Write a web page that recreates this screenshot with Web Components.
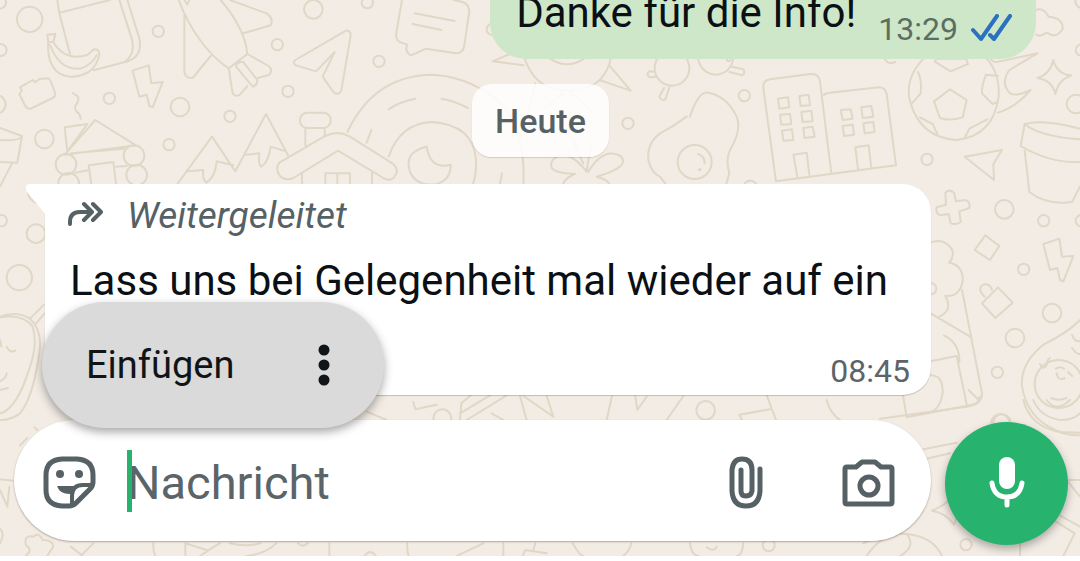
<!DOCTYPE html>
<html lang="de">
<head>
<meta charset="utf-8">
<meta name="viewport" content="width=device-width, initial-scale=1">
<title>Chat</title>
<style>
  body { margin: 0; background: #fff; font-family: Roboto, "Liberation Sans", sans-serif; }
</style>
</head>
<body>
<chat-screen>
  <chat-bubble kind="out" time="13:29">Danke für die Info!</chat-bubble>
  <date-chip>Heute</date-chip>
  <chat-bubble kind="in" time="08:45" forwarded="Weitergeleitet">Lass uns bei Gelegenheit mal wieder auf ein</chat-bubble>
  <message-composer slot="composer" placeholder="Nachricht">
    <paste-menu>Einfügen</paste-menu>
  </message-composer>
</chat-screen>

<script>
class ChatWallpaper extends HTMLElement {
  constructor() {
    super()
    this.attachShadow({ mode: 'open' })
    // doodles are drawn on a grid three times finer than the page
    this.shadowRoot.innerHTML = `
      <style>
        :host { display: block; position: absolute; inset: 0; overflow: hidden; background: #f3ece5; }
        svg { display: block; width: 100%; height: 100%; }
        g { fill: none; stroke: #e0d7c6; stroke-width: 6; stroke-linecap: round; stroke-linejoin: round; }
      </style>
      <svg viewBox="0 0 3240 1668" preserveAspectRatio="xMidYMin slice" aria-hidden="true">
        <!-- top left -->
        <g>
          <circle cx="89" cy="58" r="38"/><circle cx="2" cy="150" r="18"/><circle cx="0" cy="8" r="18"/>
          <circle cx="475" cy="94" r="17"/><circle cx="328" cy="295" r="17"/><circle cx="540" cy="321" r="28"/>
          <circle cx="690" cy="349" r="17"/><circle cx="507" cy="434" r="17"/><circle cx="133" cy="417" r="28"/>
          <circle cx="832" cy="134" r="17"/><circle cx="940" cy="28" r="28"/><circle cx="864" cy="274" r="17"/>
          <circle cx="-10" cy="313" r="27"/>
          <path d="M172 0L178 40L210 162M178 38L330 0M358 0L395 115Q408 165 372 187L280 211M382 0L418 115Q430 175 372 187"/>
          <path d="M142 104L166 102L160 126Q195 185 262 165L282 148Q298 148 298 162Q294 195 266 216Q212 244 172 216Q140 185 145 126ZM145 126L160 126M150 135Q180 215 245 205Q280 190 290 165"/>
          <path d="M60 262L98 240L106 247L118 237L146 235Q152 238 166 282Q166 290 158 294L92 326Q82 328 76 318L58 282L66 272Z"/>
          <path d="M218 279L234 290Q238 302 226 318Q222 330 238 342L242 356"/>
          <path d="M398 212L446 196L454 250L488 246L458 322L448 318L440 284L418 290Z"/>
          <path d="M536 0Q560 65 600 120Q640 175 686 205L742 162Q735 85 662 0M553 45V215Q556 236 578 234L632 168M690 0L800 40Q822 56 812 76L730 100M553 0L562 14L568 0"/>
          <path d="M686 205L698 280Q706 292 720 284L742 258M708 200Q710 184 730 186L772 240Q772 256 758 260ZM742 162L806 198Q820 210 808 224L774 234"/>
          <path d="M886 180L1038 92Q1052 90 1052 106L1024 272Q1014 288 1000 276L968 230L1004 156L948 214L888 196Q876 188 886 180Z"/>
          <path d="M0 384L66 408L52 488L0 486M66 408Q60 424 0 420M36 490L0 560"/>
          <path d="M194 382L262 372L202 454ZM194 464L286 360L408 436ZM214 460L372 446M226 518L268 510M348 500L380 498"/>
          <circle cx="198" cy="493" r="31"/><circle cx="402" cy="467" r="31"/><circle cx="206" cy="550" r="31"/><circle cx="410" cy="525" r="31"/>
          <path d="M274 552L266 496L340 486L348 552"/>
          <path d="M532 552L636 410L706 514L798 342L864 466M560 514L610 510Q606 540 620 548Q646 530 650 484L700 496M738 464L778 460Q774 494 784 500Q806 486 812 440L858 454"/>
          <rect x="900" y="338" width="92" height="46" rx="22"/>
          <path d="M916 384V436M974 384V408M838 488L972 410Q1012 388 1050 410L1180 492Q1200 512 1182 532Q1170 546 1150 534L1014 452L880 534Q856 544 840 528Q824 508 838 488ZM906 520V560M1116 520V560M976 560V520H1050V560M1012 520V560"/>
        </g>
        <!-- top middle -->
        <g transform="translate(990 0)">
          <circle cx="112" cy="8" r="17"/><circle cx="147" cy="184" r="17"/><circle cx="487" cy="88" r="17"/><circle cx="894" cy="370" r="17"/>
          <path d="M216 0L198 104Q198 122 214 128L232 134L228 146Q236 170 248 164L288 146L378 160Q396 160 402 142L418 34Q416 12 398 6L370 0M254 40L374 63M248 72L334 90"/>
          <path d="M52 396Q130 230 300 224Q400 226 490 290Q590 370 580 560M176 328Q210 304 256 296M334 296Q372 302 414 324M124 390L110 428M516 520L510 552"/>
          <path d="M176 470Q210 370 306 366Q430 374 438 480Q440 522 428 556M290 440Q220 456 240 516Q262 562 320 552Q362 540 362 494Q300 510 290 440Z"/>
          <path d="M584 176Q610 250 670 266Q760 284 810 240Q836 210 842 176M660 176Q712 210 762 176M540 162L488 184L580 196M838 196L902 272L808 240M616 250L596 330M700 278L640 330M720 274L780 330"/>
          <path d="M770 515Q712 440 668 480Q644 520 735 522Q690 540 700 570M770 515Q780 440 790 430M775 515Q820 440 872 468Q904 500 800 530Q840 540 840 560M730 420Q740 450 760 490"/>
          <circle cx="1026" cy="205" r="52"/><path d="M976 216L958 214Q946 224 960 232L980 230M1002 264L988 290Q994 304 1006 298L1018 262"/>
          <path d="M1070 350Q1030 380 990 400Q950 430 955 480Q965 520 990 530L1010 556M1190 178Q1196 190 1202 178"/>
        </g>
        <!-- top right -->
        <g transform="translate(2070 0)">
          <path d="M24 176Q34 220 78 224Q122 220 130 176M126 200L160 208Q168 220 156 226L118 216M584 176Q594 196 616 186M0 350Q26 270 56 278Q112 290 140 350Q156 390 120 450Q106 480 118 520L108 556"/>
          <circle cx="14" cy="486" r="51"/><path d="M24 462Q44 468 44 490M164 550Q180 534 198 550"/><circle cx="29" cy="509" r="2"/>
          <circle cx="163" cy="287" r="17"/><circle cx="711" cy="478" r="17"/><circle cx="1158" cy="312" r="28"/><circle cx="1174" cy="150" r="17"/><circle cx="1176" cy="4" r="20"/>
          <path d="M258 544L220 264Q218 242 240 238L362 222Q386 220 390 244L424 520M402 286Q402 280 420 278L566 262Q586 262 590 282L618 496L258 544M322 530L310 464L350 458L358 524M504 508L496 442L536 436L544 504"/>
          <path d="M264 296L294 292L298 322L268 326ZM328 288L356 284L360 316L332 318ZM270 344L300 342L304 372L274 374ZM334 336L364 332L368 364L338 366ZM276 392L306 388L310 420L280 422ZM340 384L368 380L374 410L344 414ZM452 330L482 328L488 356L458 360ZM514 322L544 318L550 350L518 354ZM458 378L488 374L492 404L462 408ZM520 370L550 366L554 396L524 400Z"/>
          <path d="M700 176Q640 240 662 310Q692 412 800 420Q910 408 926 290Q930 220 890 176M780 268L830 300L818 352Q780 364 750 354L732 304ZM734 184Q752 196 782 214L834 192L828 176H740ZM684 216Q696 240 692 280L666 310M888 224L924 228M888 224Q874 260 876 280L908 312L922 306M690 352L728 372L742 402M824 414L838 386L892 358"/>
          <path d="M902 176Q908 190 930 184L1042 160L958 210Q930 250 960 280Q980 290 1022 270Q980 320 924 338M1038 30Q1060 20 1076 50Q1120 54 1118 86Q1100 118 1070 98Q1050 112 1038 104"/>
          <path d="M1090 180Q1102 224 1144 226Q1104 240 1096 282Q1086 240 1042 234Q1080 224 1090 180Z"/>
          <path d="M824 470L936 450L910 492L912 540ZM1004 372L992 438Q1080 490 1170 486M1004 372Q1050 410 1170 418M1004 372Q1060 356 1170 386M1004 452L1018 576Q1070 616 1146 606L1170 560"/>
        </g>
        <!-- right of the incoming message -->
        <g transform="translate(2580 540)">
          <path d="M256 38Q268 26 282 38L288 64L318 60Q332 68 328 84L298 94L302 126Q288 136 272 130L266 102L240 106Q226 98 230 82L258 74ZM376 166L418 198L390 240L344 210ZM414 322L458 368L406 414L366 370ZM374 350Q352 330 366 316Q388 306 396 330"/>
          <circle cx="433" cy="88" r="28"/><circle cx="551" cy="122" r="17"/><circle cx="664" cy="122" r="17"/><circle cx="491" cy="268" r="17"/><circle cx="576" cy="399" r="28"/><circle cx="465" cy="474" r="28"/><circle cx="412" cy="577" r="17"/><circle cx="426" cy="730" r="27"/><circle cx="212" cy="326" r="17"/>
          <path d="M550 192L598 176L606 230L640 228L610 304L600 300L592 264L570 270Z"/>
          <path d="M200 192Q250 168 276 208Q284 228 268 248Q310 256 308 302Q300 352 256 348Q280 390 238 410M212 400L330 470M306 330L366 640Q366 672 330 676L140 712L128 640M200 546L290 528L320 674M252 466Q300 490 298 546M190 590Q250 570 248 640Q240 686 214 696"/>
          <path d="M660 420Q620 460 550 494Q480 550 486 620Q500 700 560 736Q610 768 660 766M540 552Q548 572 560 556Q560 540 570 534M588 566Q600 558 612 566M590 580Q594 604 614 594M624 576L636 588M574 654Q596 664 620 654M636 464Q642 484 660 484M636 504Q650 524 660 522"/><circle cx="596" cy="612" r="72"/>
        </g>
        <!-- left of the incoming message -->
        <g transform="translate(0 540)">
          <circle cx="4" cy="122" r="17"/><circle cx="108" cy="161" r="28"/><circle cx="58" cy="293" r="38"/>
          <path d="M84 36Q84 60 112 70M0 410Q50 392 90 416Q128 450 118 520Q100 650 60 700Q30 722 0 720M0 412Q70 400 98 440Q114 490 90 560Q50 690 0 700M90 416L132 374M108 430L134 400M0 480L4 500M20 500Q28 520 46 512M0 604Q20 594 20 580M0 630L24 624M60 796L82 774M104 742L112 750M0 898L40 902M0 930L22 980L28 920"/>
        </g>
        <!-- below the composer -->
        <g transform="translate(0 1200)">
          <path d="M0 386Q16 400 0 430M78 466Q100 450 78 436Q70 404 100 410Q116 394 128 420Q160 420 160 440L140 470M212 440L246 466M280 430L240 470M460 430Q458 450 466 468M556 468V430L620 450M600 468Q640 440 660 430M690 430Q740 442 780 430M740 468Q800 460 828 430M894 430Q908 444 924 430M988 430V468M1094 468Q1110 444 1128 468"/>
          <path d="M1100 35L1160 60M1240 6L1246 28L1310 14M1222 430Q1220 450 1226 468M1370 468L1450 430M1510 430V468M1568 468L1576 450L1640 460M1600 450L1606 430M1718 430Q1740 468 1750 468M1870 468Q1890 450 1894 430M2070 430Q2076 468 2096 468M2120 442Q2140 458 2150 440M2230 430Q2226 468 2210 468"/>
          <circle cx="1327" cy="55" r="27"/><circle cx="2117" cy="31" r="28"/><circle cx="2306" cy="436" r="18"/><circle cx="2898" cy="434" r="17"/><circle cx="3001" cy="70" r="28"/>
          <path d="M1380 60L1384 10L1420 -20M1380 40L1480 -20M1400 60L1520 -14M1475 40L1510 60M1560 -12L1580 60M1570 -12L1660 50L1640 -12M1836 -12L1820 60M1906 -12L1912 30L1940 -10M2050 -12L2000 60M2218 44L2310 28M2298 -20L2328 60M2218 44L2226 60"/>
          <path d="M2480 0Q2490 40 2520 60M2640 56L2900 20Q2940 14 2938 -10M2770 148L2870 128M2780 176L2850 160M2906 -30L2936 0M3070 0Q3090 80 3180 96L3240 98M3100 0Q3120 50 3180 60Q3220 60 3240 40M3140 0Q3170 40 3210 0M2796 332Q2850 310 2856 282M2796 332Q2840 340 2862 374Q2872 340 2892 334M3120 240H3240M3200 240L3240 290M3150 330L3240 380M3160 360L3224 400L3190 468M3060 430V468"/>
          <path d="M2590 430Q2650 396 2720 402Q2800 410 2826 468M2600 468Q2640 408 2690 406M2720 402Q2750 440 2700 468"/>
        </g>
      </svg>
    `
  }
}

class ChatScreen extends HTMLElement {
  constructor() {
    super()
    this.attachShadow({ mode: 'open' })
    this.shadowRoot.innerHTML = `
      <style>
        :host { display: block; position: relative; overflow: hidden; }
        main { position: relative; }
        /* the list is scrolled a little past its first message */
        .messages { display: flex; flex-direction: column; margin-top: -12px; padding: 0 44px 25px 45px; }
      </style>
      <chat-wallpaper></chat-wallpaper>
      <main>
        <div class="messages"><slot></slot></div>
        <slot name="composer"></slot>
      </main>
    `
  }
}

class ChatBubble extends HTMLElement {
  constructor() {
    super()
    this.attachShadow({ mode: 'open' })
  }

  connectedCallback() {
    const forwarded = this.getAttribute('forwarded')
    const out = this.getAttribute('kind') === 'out'
    this.shadowRoot.innerHTML = `
      <style>
        :host {
          display: flex;
          position: relative;
          box-sizing: border-box;
          color: #0a1014;
          font-size: 42px;
          line-height: 50px;
          background: #fff;
          border-radius: 28px;
          box-shadow: 0 1px 1px rgba(90,80,60,0.3);
        }
        :host([kind="out"]) {
          align-self: flex-end;
          gap: 22px;
          padding: 0 22px 21px 26px;
          background: #cfe7c9;
          border-radius: 0 0 36px 36px;
          box-shadow: none;
        }
        :host([kind="in"]) {
          flex-direction: column;
          margin-right: 105px;
          padding: 10px 21px 4px 25px;
          border-top-left-radius: 0;
        }
        p { margin: 0; }
        :host([kind="in"]) p { min-height: 95px; }
        .forwarded {
          display: flex;
          align-items: center;
          gap: 24px;
          margin: 0 0 18px -3px;
          color: #566165;
          font-size: 37px;
          font-style: italic;
          line-height: 44px;
        }
        .meta {
          display: flex;
          align-self: flex-end;
          align-items: center;
          gap: 12px;
          color: #5b6569;
          font-size: 32px;
          line-height: 40px;
        }
        :host([kind="out"]) .meta { margin-bottom: -11px; color: #5a6f62; }
        svg { display: block; fill: none; stroke-linecap: round; stroke-linejoin: round; }
        .tail { position: absolute; top: 0; right: 100%; fill: #fff; }
      </style>
      ${out ? '' : `<svg class="tail" width="20" height="30" viewBox="0 0 20 30" aria-hidden="true"><path d="M4 0H20V30L17 26L2 8Q-1 1 4 0Z"/></svg>`}
      ${forwarded ? `
      <div class="forwarded">
        <svg width="36" height="30" viewBox="0 0 36 30" stroke="#566165" stroke-width="4" aria-hidden="true">
          <path d="M3 23V21Q3 11 13 11H23M17 3L25 11L17 19M26 3L34 11L26 19"/>
        </svg>
        <span>${forwarded}</span>
      </div>` : ''}
      <p><slot></slot></p>
      <div class="meta">
        <time>${this.getAttribute('time')}</time>
        ${out ? `
        <svg width="44" height="30" viewBox="0 0 44 30" stroke="#2a72c0" stroke-width="4" aria-label="Gelesen" role="img">
          <path d="M3 16L11 25L27 2M20 21L24 25L40 2"/>
        </svg>` : ''}
      </div>
    `
  }
}

class DateChip extends HTMLElement {
  constructor() {
    super()
    this.attachShadow({ mode: 'open' })
    this.shadowRoot.innerHTML = `
      <style>
        :host {
          display: block;
          align-self: center;
          margin: 25px 0 27px;
          padding: 17px 23px 15px;
          color: #566165;
          background: rgba(255,255,255,0.85);
          border-radius: 20px;
          box-shadow: 0 1px 1px rgba(90,80,60,0.2);
          font-size: 34px;
          font-weight: 500;
          line-height: 41px;
        }
      </style>
      <slot></slot>
    `
  }
}

class PasteMenu extends HTMLElement {
  constructor() {
    super()
    this.attachShadow({ mode: 'open' })
    this.shadowRoot.innerHTML = `
      <style>
        :host {
          display: flex;
          align-items: center;
          gap: 84px;
          padding: 0 54px 0 44px;
          height: 126px;
          background: #d9dad9;
          border-radius: 63px;
          box-shadow: 0 4px 10px rgba(0,0,0,0.35);
        }
        button { padding: 0; border: 0; background: none; color: #101417; font: inherit; font-size: 38px; line-height: 44px; cursor: pointer; }
        svg { display: block; }
      </style>
      <button type="button"><slot></slot></button>
      <button type="button" aria-label="Weitere Optionen">
        <svg width="12" height="42" viewBox="0 0 12 42"><g fill="#101417"><circle cx="6" cy="6" r="5.5"/><circle cx="6" cy="21" r="5.5"/><circle cx="6" cy="36" r="5.5"/></g></svg>
      </button>
    `
  }
}

class MessageComposer extends HTMLElement {
  constructor() {
    super()
    this.attachShadow({ mode: 'open' })
  }

  connectedCallback() {
    const placeholder = this.getAttribute('placeholder') || ''
    this.shadowRoot.innerHTML = `
      <style>
        :host { display: block; position: relative; padding: 0 12px 11px 14px; }
        form { display: flex; gap: 14px; }
        .field {
          display: flex;
          flex: 1;
          min-width: 0;
          align-items: center;
          box-sizing: border-box;
          height: 121px;
          padding: 4px 36px 0 29px;
          background: #fff;
          border-radius: 61px;
          box-shadow: 0 1px 2px rgba(90,80,60,0.45);
        }
        .text { display: flex; flex: 1; min-width: 0; position: relative; margin: 0 31px; }
        .caret { position: absolute; left: 0; top: 0; width: 5px; height: 62px; background: #27b36e; }
        input {
          flex: 1;
          min-width: 0;
          height: 66px;
          padding: 0;
          border: 0;
          outline: 0;
          background: none;
          color: #0a1014;
          font: inherit;
          font-size: 47px;
        }
        input::placeholder { color: #5b6569; opacity: 1; }
        button { flex: none; padding: 0; border: 0; background: none; color: #566165; cursor: pointer; }
        .attach { margin-right: 79px; }
        .mic {
          display: grid;
          place-items: center;
          width: 123px;
          height: 123px;
          margin-top: 2px;
          border-radius: 50%;
          background: #27b36e;
          color: #fff;
          box-shadow: 0 4px 8px rgba(0,0,0,0.3);
        }
        svg { display: block; fill: none; stroke: currentColor; stroke-linecap: round; stroke-linejoin: round; }
        ::slotted(paste-menu) { position: absolute; left: 42px; bottom: 128px; }
      </style>
      <form>
        <div class="field">
          <button type="button" aria-label="Sticker">
            <svg width="53" height="53" viewBox="0 0 53 53" stroke-width="5">
              <path d="M19 3H34Q50 4 50 19V26Q50 30 47 33L33 47Q30 50 26 50H19Q3 49 3 34V19Q3 4 19 3Z"/>
              <path d="M29 49V40Q29 29 40 29H49" stroke-width="4"/>
              <path d="M14 30H38Q31 32 29 38Q17 39 14 30Z" fill="currentColor" stroke="none"/>
              <circle cx="17" cy="18" r="4" fill="currentColor" stroke="none"/><circle cx="36" cy="18" r="4" fill="currentColor" stroke="none"/>
            </svg>
          </button>
          <div class="text">
            <input type="text" aria-label="${placeholder}" placeholder="${placeholder}">
            <span class="caret"></span>
          </div>
          <button type="button" class="attach" aria-label="Anhang">
            <svg width="34" height="53" viewBox="0 0 34 53" stroke-width="5">
              <path d="M31 13V35Q30 50 17 50Q4 50 3 35V14Q4 3 13 3Q23 3 23 14V35Q22 40 17 40Q12 40 12 35V14"/>
            </svg>
          </button>
          <button type="button" aria-label="Kamera">
            <svg width="53" height="48" viewBox="0 0 53 48" stroke-width="5">
              <path d="M5 8H14L20 3H33L39 8H48Q50 8 50 10V43Q50 45 48 45H5Q3 45 3 43V10Q3 8 5 8Z"/>
              <circle cx="27" cy="27" r="9"/>
            </svg>
          </button>
        </div>
        <button type="button" class="mic" aria-label="Sprachnachricht">
          <svg width="38" height="54" viewBox="0 0 38 54" stroke-width="5">
            <rect x="11" y="0" width="16" height="32" rx="8" fill="currentColor" stroke="none"/>
            <path d="M4 26Q6 40 19 40Q32 40 34 26M19 40V48"/>
          </svg>
        </button>
      </form>
      <slot></slot>
    `
  }
}

customElements.define('chat-wallpaper', ChatWallpaper)
customElements.define('chat-screen', ChatScreen)
customElements.define('chat-bubble', ChatBubble)
customElements.define('date-chip', DateChip)
customElements.define('paste-menu', PasteMenu)
customElements.define('message-composer', MessageComposer)
</script>
</body>
</html>
